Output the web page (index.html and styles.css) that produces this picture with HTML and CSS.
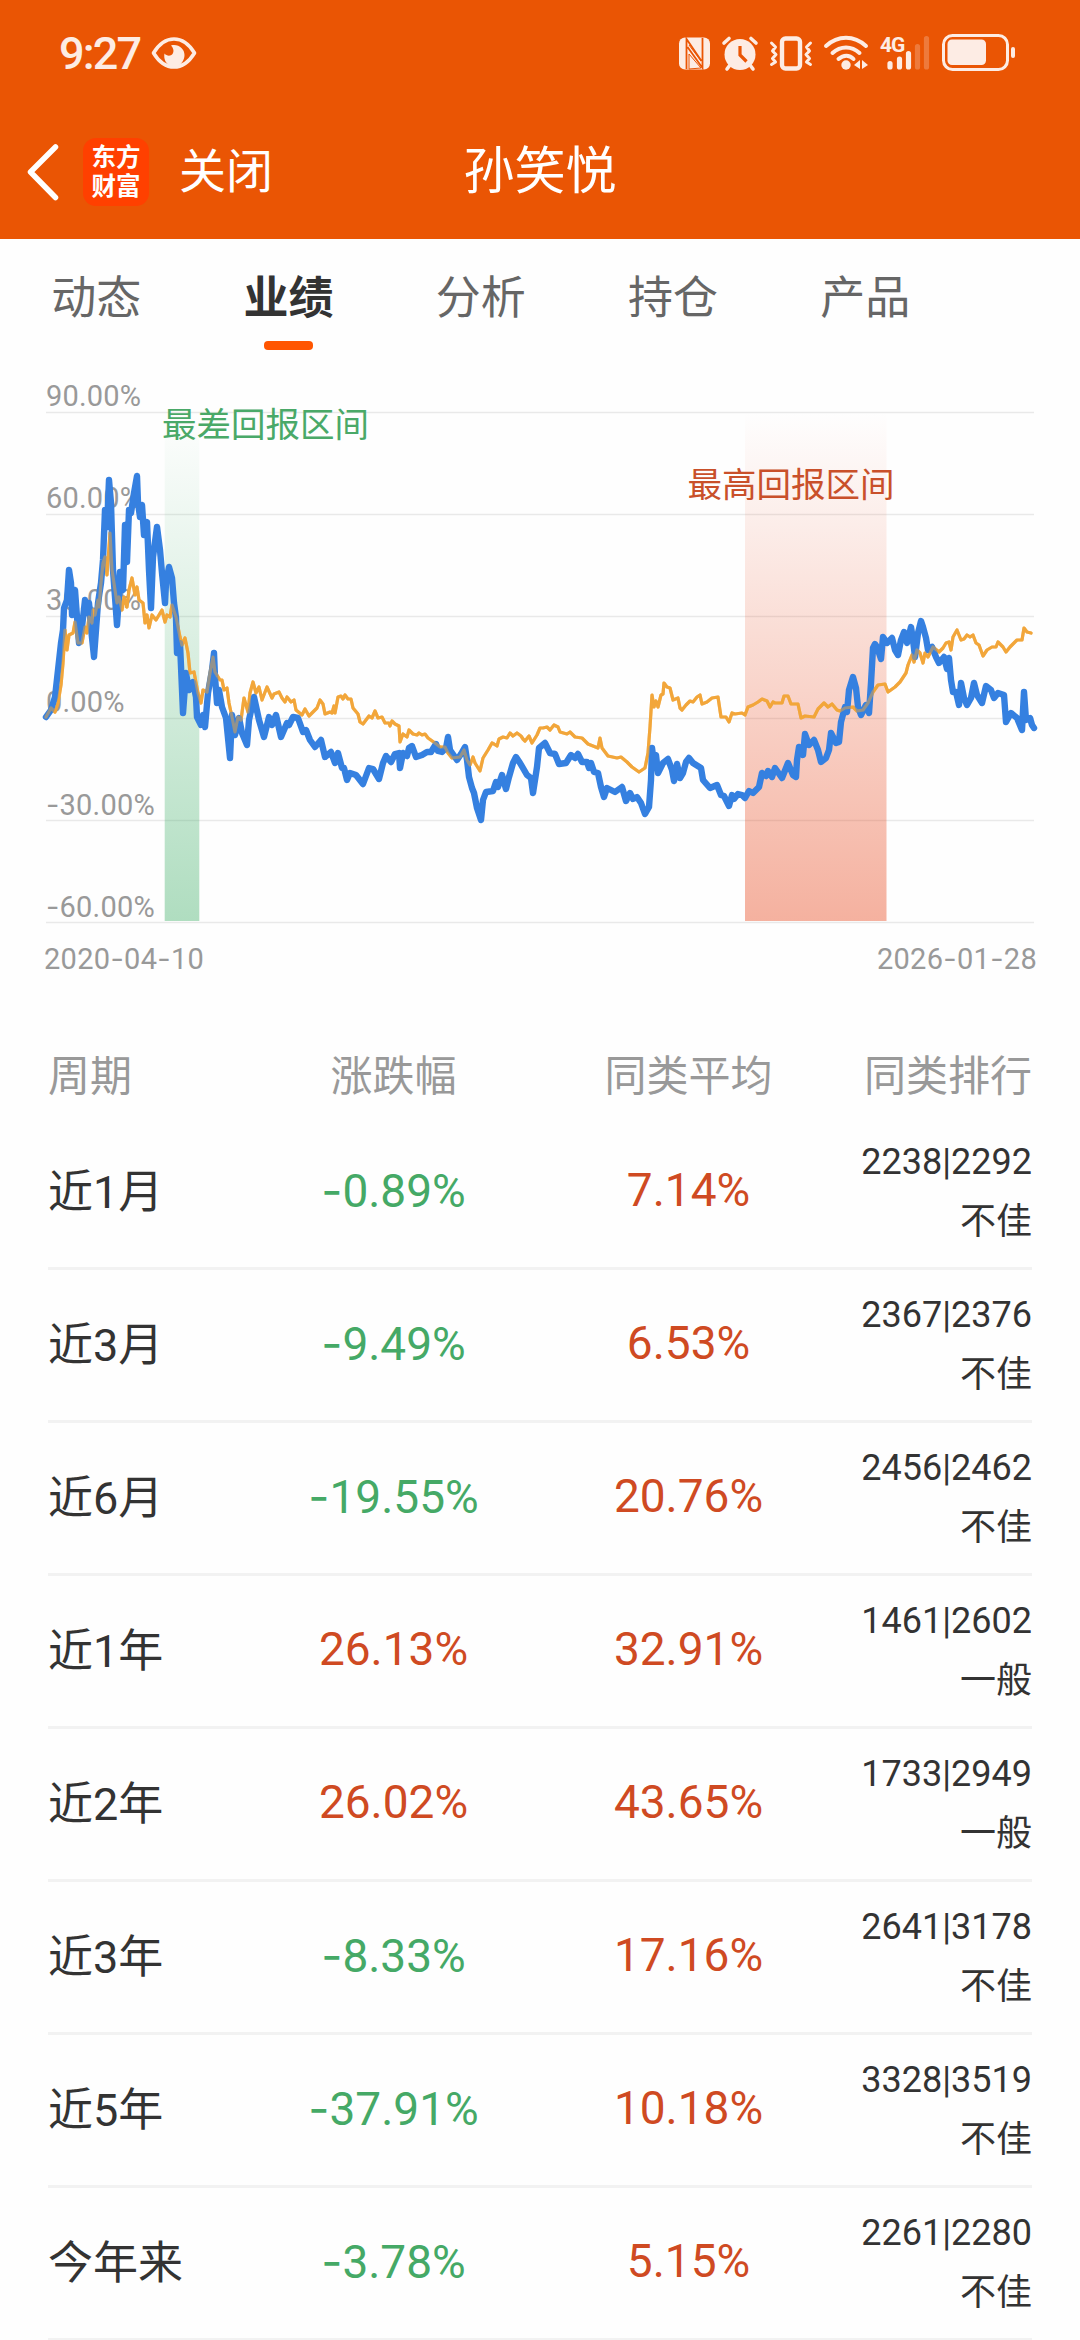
FILE: index.html
```html
<!DOCTYPE html>
<html lang="zh-CN">
<head>
    <meta charset="UTF-8">
    <meta name="viewport" content="width=device-width, initial-scale=1.0">
    <title>孙笑悦 - 业绩</title>
    <link rel="stylesheet" href="styles.css">
</head>
<body>

<header class="header">
    <div class="status-bar">
        <span class="time">9:27</span>
        <svg class="eye" width="46" height="34" viewBox="0 0 46 34">
            <path d="M2.500 17C8 8 15 3 23 3s15 5 20.500 14C38 26 31 31 23 31S8 26 2.500 17z" fill="none" stroke="#fdece4" stroke-width="3.600" stroke-linejoin="round"/>
            <path d="M20 9.500c7-2 13.500 3 13.500 9.500 0 5-3 9-6 10.500-3 1-6 1-9 0-4-2.500-6-7-5-12 2 2.500 6 3 8 .5 1.800-2.500 1-6-1.500-8.500z" fill="#fdece4"/>
        </svg>
        <svg class="status-icons" width="342" height="40" viewBox="676 32 342 40">
            <!-- NFC -->
            <rect x="679" y="36.500" width="31" height="32" rx="6" fill="#fdece4"/>
            <path d="M686.500 68V38l15 22M702.500 37v30l-15-21" fill="none" stroke="#ea5504" stroke-width="1.800"/>
            <path d="M689 44l12 16M689 53v15l12-1-12-14z" fill="none" stroke="#ea5504" stroke-width="1"/>
            <!-- alarm -->
            <circle cx="740" cy="53.500" r="15.500" fill="#fdece4"/>
            <path d="M724 42l5-4.500M756 42l-5-4.500M730 64l-3 4M750 64l3 4" stroke="#fdece4" stroke-width="3.600" stroke-linecap="round"/>
            <path d="M740 45v9l6.500 6.500" fill="none" stroke="#ea5504" stroke-width="3.200"/>
            <!-- vibrate -->
            <rect x="782" y="37.500" width="18" height="30" rx="3.500" fill="none" stroke="#fdece4" stroke-width="4.400"/>
            <path d="M771.500 42l4 4-3 4 3.500 3.500-3.500 4 3 3.500-4 2.500M810.500 42l-4 4 3 4-3.500 3.500 3.500 4-3 3.500 4 2.500" fill="none" stroke="#fdece4" stroke-width="3" stroke-linecap="round" stroke-linejoin="round"/>
            <!-- wifi -->
            <path d="M826 45c12-11 28-11 40 0M832.500 52c8-7.500 19-7.500 27 0M838.500 58c5-4.500 11-4.500 15 0" fill="none" stroke="#fdece4" stroke-width="4" stroke-linecap="round"/>
            <circle cx="846" cy="64" r="4.700" fill="#fdece4"/>
            <path d="M860 59v9l-6-4zM862 59v9l6-4z" fill="#fdece4"/>
            <!-- mobile signal -->
            <text class="network" x="880" y="51">4G</text>
            <g stroke="#fdece4" stroke-width="5.200" stroke-linecap="round">
                <path d="M890 62.500v3.500M899.500 58v8M908.500 52.500v13.500"/>
                <path d="M917.500 45.500v20.500M926.500 37.500v28.500" stroke-opacity=".25"/>
            </g>
            <!-- battery -->
            <rect x="943.500" y="34.500" width="64" height="34" rx="9" fill="none" stroke="#fdece4" stroke-width="3"/>
            <rect x="947.500" y="38.500" width="38.500" height="25.500" rx="4.500" fill="#fdece4"/>
            <rect x="1011" y="46" width="4" height="11" rx="2" fill="#fdece4"/>
        </svg>
    </div>
    <div class="nav-bar">
        <div class="nav-left">
            <svg class="back" width="34" height="58" viewBox="0 0 34 58">
                <path d="M29.500 4L4.500 29l25 25.500" fill="none" stroke="#fff" stroke-width="5.500" stroke-linecap="round" stroke-linejoin="round"/>
            </svg>
            <div class="logo"><span>东方</span><span>财富</span></div>
            <span class="close">关闭</span>
        </div>
        <h1>孙笑悦</h1>
    </div>
</header>

<nav class="tabs">
    <a class="tab">动态</a>
    <a class="tab active">业绩</a>
    <a class="tab">分析</a>
    <a class="tab">持仓</a>
    <a class="tab">产品</a>
</nav>

<section class="chart">
    <svg width="1080" height="560" viewBox="0 370 1080 560">
        <defs>
            <linearGradient id="worst" x1="0" y1="0" x2="0" y2="1">
                <stop offset="0" stop-color="#43b06a" stop-opacity="0"/>
                <stop offset="1" stop-color="#43b06a" stop-opacity=".42"/>
            </linearGradient>
            <linearGradient id="best" x1="0" y1="0" x2="0" y2="1">
                <stop offset="0" stop-color="#e8471c" stop-opacity="0"/>
                <stop offset="1" stop-color="#e8471c" stop-opacity=".42"/>
            </linearGradient>
        </defs>

        <path class="grid" d="M46 412.500h988M46 514.500h988M46 616.500h988M46 718.500h988M46 820.500h988M46 922.500h988"/>

        <g class="axis">
            <text x="46" y="406">90.00%</text>
            <text x="46" y="508">60.00%</text>
            <text x="46" y="610">30.00%</text>
            <text x="46" y="711.500">0.00%</text>
            <text x="46" y="814.500"><tspan class="minus">-</tspan>30.00%</text>
            <text x="46" y="916.500"><tspan class="minus">-</tspan>60.00%</text>
        </g>

        <rect x="164.700" y="412" width="34.600" height="509" fill="url(#worst)"/>
        <rect x="745" y="412" width="141.500" height="509" fill="url(#best)"/>

        <!-- category average -->
        <polyline id="average" class="line-average" points="46,717 51,708 55,712 58,703 61,685 63,663 65,630 67,650 69,635 73,633 75,622 78,643 82,643 85,627 87,633 89,617 92,623 93,610 95,615 98,600 99,607 101,583 103,563 105,557 107,575 110,533 112,570 115,590 117,603 119,597 122,610 124,597 127,607 129,590 132,578 135,595 137,587 139,600 143,603 145,623 147,615 149,628 152,615 156,620 162,610 165,622 167,615 170,617 172,605 176,617 180,637 182,645 185,638 188,653 190,673 194,672 198,693 201,703 203,690 207,692 210,673 213,657 215,672 220,680 222,680 224,690 227,688 229,703 232,717 235,732 238,717 241,720 244,698 248,712 250,693 253,682 256,693 259,687 262,700 267,687 272,698 274,694 279,692 282,698 285,702 287,697 291,702 294,700 296,710 302,715 305,709 309,716 317,708 320,700 323,704 325,714 330,712 332,713 334,706 335,713 338,697 341,696 343,699 345,695 348,699 351,699 353,708 358,714 360,722 363,724 369,716 372,718 375,711 378,718 382,717 385,723 389,723 390,726 392,721 395,724 399,726 400,742 403,734 407,737 409,730 413,734 417,735 419,733 422,735 425,734 428,738 435,743 440,747 445,747 448,753 452,758 460,757 464,750 467,760 470,765 473,757 475,763 480,771 483,758 488,750 492,743 494,744 497,746 499,739 503,737 507,738 510,733 513,736 517,733 521,736 523,739 525,741 529,736 532,743 537,735 540,728 543,728 547,727 550,730 554,725 558,727 560,732 567,734 570,732 575,737 582,738 588,744 593,746 598,748 600,738 602,748 608,756 617,758 621,757 627,762 632,767 639,772 645,768 648,753 650,727 652,695 654,707 656,701 658,707 661,695 663,694 664,683 667,687 670,688 673,700 678,698 680,708 682,710 686,705 690,701 693,702 697,697 700,695 702,704 707,702 712,698 718,697 721,717 726,717 729,722 732,713 735,714 742,713 745,715 748,707 753,705 758,702 762,699 767,701 770,707 773,702 775,703 782,703 784,696 788,696 791,704 798,704 801,718 805,716 814,717 818,709 824,703 828,707 832,704 837,710 840,711 845,708 853,707 857,711 863,710 868,703 873,692 878,685 885,684 888,692 895,687 900,682 906,673 908,665 912,655 914,662 917,650 920,653 923,663 925,653 928,657 933,647 939,652 943,648 946,643 949,642 951,650 953,637 957,630 961,640 964,639 967,635 970,637 973,635 976,643 979,645 983,656 987,650 992,647 996,647 998,642 1003,647 1006,652 1010,647 1017,640 1022,640 1024,628 1027,632 1031,633"/>

        <!-- manager -->
        <polyline class="line-manager" points="46,717 51,710 55,697 58,670 61,643 63,630 64,608 67,600 69,570 71,583 72,615 75,590 77,617 79,643 82,627 85,600 87,613 89,603 91,628 94,657 96,630 98,603 101,583 103,560 105,510 107,527 109,480 111,503 113,570 115,597 117,625 119,597 120,572 123,590 125,525 127,562 129,510 131,513 134,493 137,476 138,503 140,517 142,505 144,535 147,522 149,570 151,608 153,557 157,527 160,550 162,573 165,603 166,583 169,567 172,578 174,603 176,618 177,653 180,643 183,713 186,673 189,690 193,682 196,697 197,717 201,725 203,715 205,727 208,693 212,670 214,653 215,677 217,703 219,690 222,707 226,718 230,758 232,715 235,735 239,718 242,733 247,745 249,720 254,697 259,720 264,737 269,717 272,725 276,715 281,737 287,723 289,725 293,717 298,718 303,732 306,730 310,740 315,747 321,740 325,757 331,752 335,763 338,753 342,768 344,768 347,780 350,773 356,775 363,784 369,768 373,769 379,779 383,763 386,756 391,762 395,754 399,753 400,768 403,753 407,756 409,748 412,746 416,757 422,755 427,752 431,752 436,744 438,751 442,752 446,748 448,737 450,750 457,760 461,754 465,747 467,760 469,777 472,788 474,793 477,808 481,820 483,800 486,792 493,791 496,782 498,787 502,775 506,789 509,777 513,763 516,757 520,763 527,775 531,778 533,793 537,767 539,748 545,743 550,753 555,754 559,764 566,763 571,755 575,758 578,754 582,762 587,762 589,768 591,763 594,772 598,773 601,787 604,797 607,788 615,792 622,787 626,801 630,793 633,799 637,797 641,803 645,814 649,807 651,780 652,748 654,763 656,755 658,773 663,763 668,759 672,770 674,781 677,764 680,778 683,773 686,762 689,758 693,763 701,768 703,780 710,788 717,785 721,795 724,796 729,806 732,795 734,799 738,794 742,795 745,798 749,791 753,793 759,787 762,773 766,776 768,771 772,777 775,768 782,778 788,763 793,775 796,777 797,760 799,747 803,755 805,734 809,745 814,740 818,750 821,762 826,758 829,750 831,733 836,743 839,742 841,722 845,707 847,712 849,690 853,677 856,688 858,707 861,715 866,705 869,713 871,683 873,648 875,644 877,647 881,659 883,637 887,643 892,638 895,650 898,655 901,640 904,632 907,643 911,627 913,640 915,657 918,633 921,621 923,627 926,638 928,650 932,647 936,657 939,663 944,657 947,669 949,658 951,680 953,692 956,692 959,705 961,683 964,698 967,705 971,698 974,683 977,695 982,703 986,686 991,690 994,698 998,693 1004,695 1006,722 1011,713 1017,718 1022,730 1024,692 1026,720 1030,718 1032,725 1034,728"/>
        <use href="#average" opacity=".5"/>

        <text class="label worst" x="162" y="437">最差回报区间</text>
        <text class="label best" x="687.500" y="497">最高回报区间</text>
    </svg>
    <div class="dates">
        <span>2020<span class="minus">-</span>04<span class="minus">-</span>10</span>
        <span>2026<span class="minus">-</span>01<span class="minus">-</span>28</span>
    </div>
</section>

<section class="table">
    <div class="row head">
        <span>周期</span><span>涨跌幅</span><span>同类平均</span><span>同类排行</span>
    </div>
    <div class="row">
        <span class="period">近1月</span>
        <span class="value down"><span class="minus">-</span>0.89%</span>
        <span class="value up">7.14%</span>
        <span class="rank">2238|2292<br>不佳</span>
    </div>
    <div class="row">
        <span class="period">近3月</span>
        <span class="value down"><span class="minus">-</span>9.49%</span>
        <span class="value up">6.53%</span>
        <span class="rank">2367|2376<br>不佳</span>
    </div>
    <div class="row">
        <span class="period">近6月</span>
        <span class="value down"><span class="minus">-</span>19.55%</span>
        <span class="value up">20.76%</span>
        <span class="rank">2456|2462<br>不佳</span>
    </div>
    <div class="row">
        <span class="period">近1年</span>
        <span class="value up">26.13%</span>
        <span class="value up">32.91%</span>
        <span class="rank">1461|2602<br>一般</span>
    </div>
    <div class="row">
        <span class="period">近2年</span>
        <span class="value up">26.02%</span>
        <span class="value up">43.65%</span>
        <span class="rank">1733|2949<br>一般</span>
    </div>
    <div class="row">
        <span class="period">近3年</span>
        <span class="value down"><span class="minus">-</span>8.33%</span>
        <span class="value up">17.16%</span>
        <span class="rank">2641|3178<br>不佳</span>
    </div>
    <div class="row">
        <span class="period">近5年</span>
        <span class="value down"><span class="minus">-</span>37.91%</span>
        <span class="value up">10.18%</span>
        <span class="rank">3328|3519<br>不佳</span>
    </div>
    <div class="row">
        <span class="period">今年来</span>
        <span class="value down"><span class="minus">-</span>3.78%</span>
        <span class="value up">5.15%</span>
        <span class="rank">2261|2280<br>不佳</span>
    </div>
</section>

</body>
</html>
```

FILE: styles.css
```css
* {
    box-sizing: border-box;
}

body {
    margin: 0;
    width: 1080px;
    height: 2340px;
    overflow: hidden;
    background-color: #fefefe;
    color: #333;
    font-family: Roboto, "Noto Sans CJK SC", sans-serif;
}

svg {
    display: block;
}

/* wider dash than the one in Roboto */
.minus {
    font-family: Inter, sans-serif;
}

/* header */
.header {
    height: 239px;
    background-color: #ea5504;
    color: #fff;
}

.status-bar {
    display: flex;
    align-items: center;
    height: 106px;
    padding: 0 62px 0 59px;
    color: #fdece4;
}

.time {
    width: 92px;
    font-size: 45px;
    font-weight: 500;
    letter-spacing: -1.8px;
}

.status-icons {
    margin-left: auto;
}

.network {
    fill: #fdece4;
    font-size: 21px;
    font-weight: 700;
    letter-spacing: -1px;
}

.nav-bar {
    display: grid;
    grid-template-columns: 1fr auto 1fr;
    align-items: center;
    height: 132px;
}

.nav-left {
    display: flex;
    align-items: center;
    padding-left: 26px;
}

.logo {
    display: flex;
    flex-direction: column;
    align-items: center;
    justify-content: center;
    width: 66px;
    height: 68px;
    margin: 0 30px 0 23px;
    border-radius: 13px;
    background-color: #ff4000;
    font-size: 24.5px;
    font-weight: 700;
    line-height: 29px;
}

.close {
    font-size: 47px;
    line-height: 60px;
}

.nav-bar h1 {
    margin: 0;
    font-size: 51px;
    font-weight: 400;
    line-height: 60px;
}

/* tabs */
.tabs {
    display: flex;
    height: 131px;
}

.tab {
    display: flex;
    flex-direction: column;
    align-items: center;
    width: 192.3px;
    padding-top: 29px;
    font-size: 45px;
    line-height: 62px;
    color: #666;
}

.tab.active {
    font-weight: 700;
    color: #333;
}

.tab.active::after {
    content: "";
    width: 49px;
    height: 9px;
    margin-top: 11px;
    border-radius: 4px;
    background-color: #ff5500;
}

/* chart */
.grid {
    fill: none;
    stroke: #e9e9e9;
    stroke-width: 1.5;
}

.axis {
    fill: #999;
    font-size: 29px;
    letter-spacing: .2px;
}

.line-average,
.line-manager {
    fill: none;
    stroke-linecap: round;
    stroke-linejoin: round;
}

.line-average {
    stroke: #f2a63a;
    stroke-width: 3.2;
}

.line-manager {
    stroke: #3580e0;
    stroke-width: 6.4;
}

.label {
    font-size: 34.5px;
}

.label.worst {
    fill: #4aa968;
}

.label.best {
    fill: #c9502a;
}

.dates {
    display: flex;
    justify-content: space-between;
    height: 100px;
    padding: 9px 43px 0 44px;
    font-size: 29px;
    line-height: 40px;
    letter-spacing: .3px;
    color: #999;
}

/* table */
.table {
    padding: 0 48px;
}

.row {
    display: grid;
    grid-template-columns: 198px 295px 295px 196px;
    align-items: center;
    height: 153px;
    border-bottom: 3px solid #f2f2f2;
    text-align: center;
}

.row > :first-child {
    text-align: left;
}

.row > :last-child {
    text-align: right;
}

.row.head {
    height: 87px;
    padding-bottom: 2px;
    border-bottom: none;
    font-size: 42px;
    color: #999;
}

.period {
    padding-bottom: 8px;
    font-size: 45px;
}

.value {
    padding-bottom: 4px;
    font-size: 46px;
}

.rank {
    font-size: 36px;
    line-height: 60px;
}

.up {
    color: #cf4a22;
}

.down {
    color: #45a966;
}
```
